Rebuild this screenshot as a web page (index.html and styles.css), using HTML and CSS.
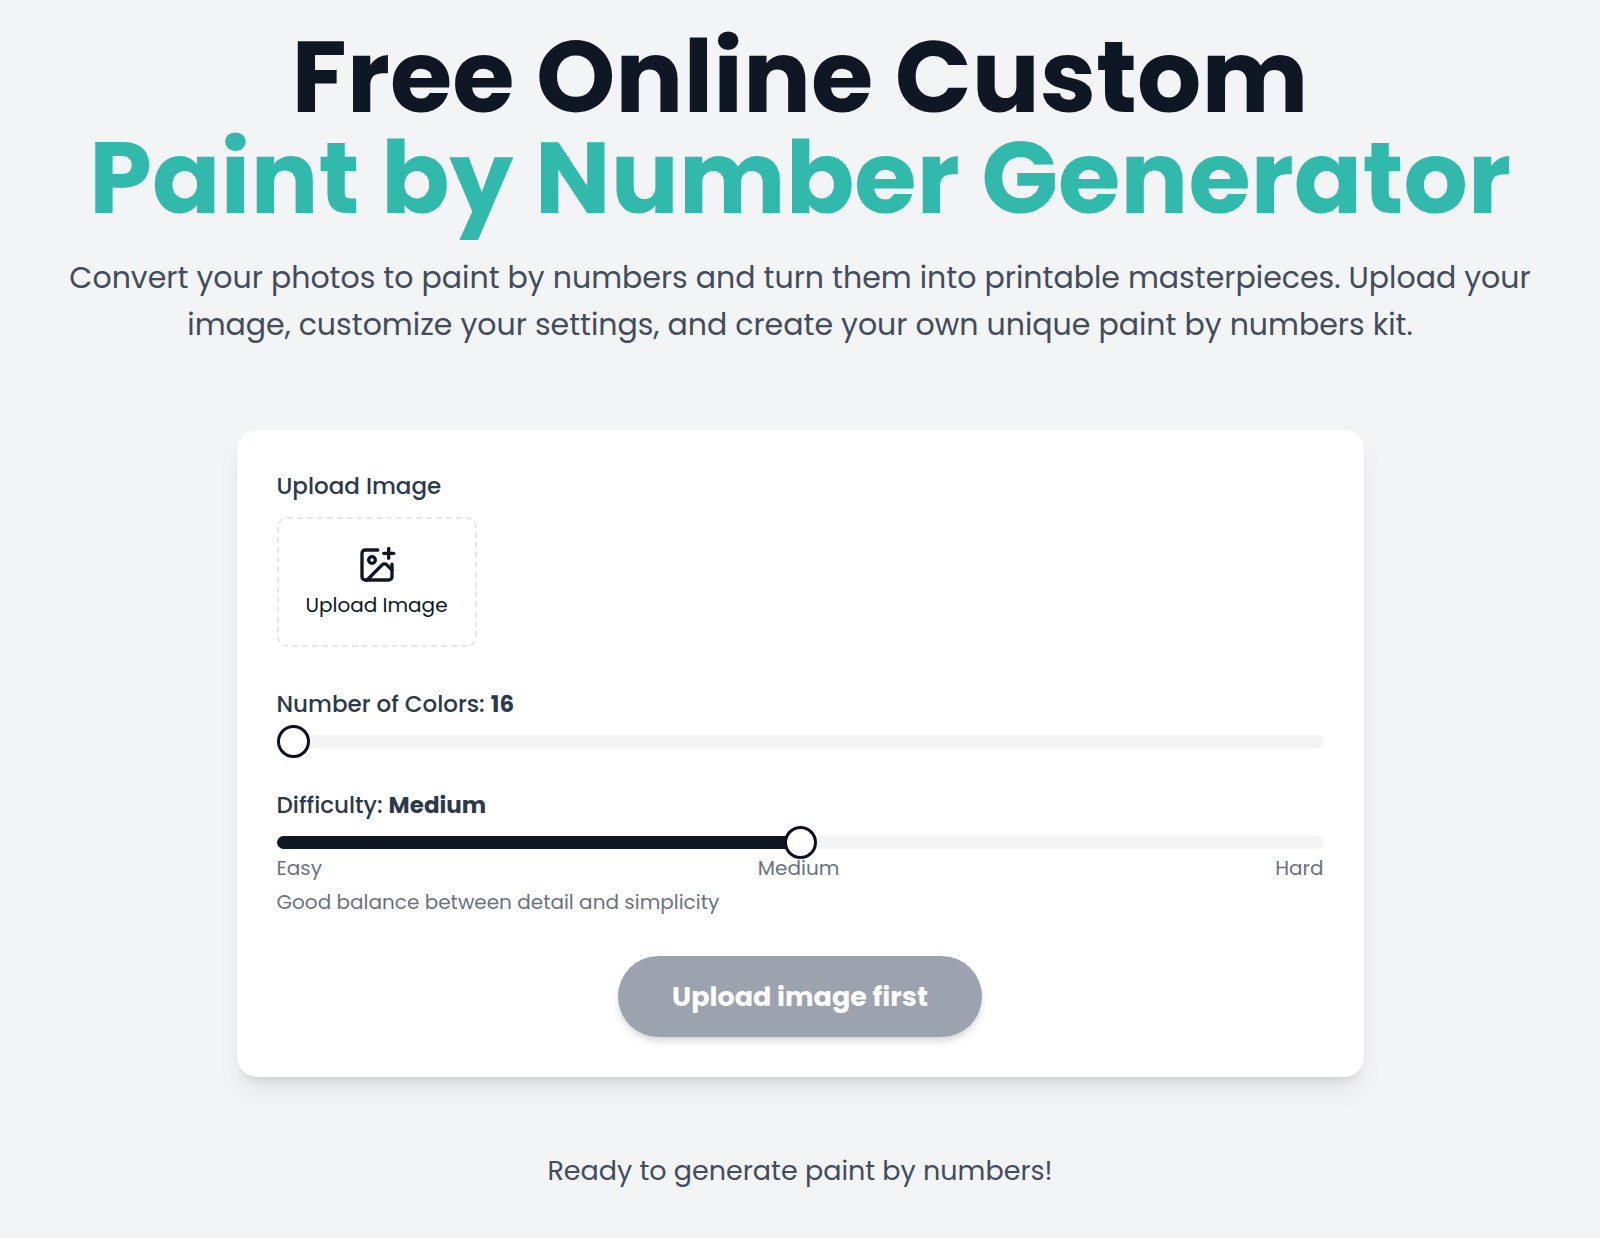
FILE: index.html
```
<!DOCTYPE html>
<html lang="en">
<head>
<meta charset="utf-8">
<meta name="viewport" content="width=device-width, initial-scale=1">
<title>Free Online Custom Paint by Number Generator</title>
<link rel="stylesheet" href="styles.css">
</head>
<body>
<main class="page">
  <header class="hero">
    <h1 class="title">Free Online Custom <span class="accent">Paint by Number Generator</span></h1>
    <p class="intro">Convert your photos to paint by numbers and turn them into printable masterpieces. Upload your image, customize your settings, and create your own unique paint by numbers kit.</p>
  </header>
  <form class="card">
    <div class="field">
      <div class="label">Upload Image</div>
      <button class="upload" type="button">
        <svg class="upload-icon" viewBox="0 0 24 24" fill="none" stroke="currentColor" stroke-width="2" stroke-linecap="round" stroke-linejoin="round" aria-hidden="true">
          <path d="M16 5h6"/><path d="M19 2v6"/>
          <path d="M21 11.5V19a2 2 0 0 1-2 2H5a2 2 0 0 1-2-2V5a2 2 0 0 1 2-2h7.5"/>
          <path d="m21 15-3.086-3.086a2 2 0 0 0-2.828 0L6 21"/>
          <circle cx="9" cy="9" r="2"/>
        </svg>
        <span>Upload Image</span>
      </button>
    </div>
    <div class="field">
      <label class="label" for="colors">Number of Colors: <strong>16</strong></label>
      <input class="slider slider-empty" id="colors" type="range" min="16" max="64" value="16">
    </div>
    <div class="field">
      <label class="label" for="difficulty">Difficulty: <strong>Medium</strong></label>
      <div class="scale">
        <input class="slider" id="difficulty" type="range" min="0" max="2" value="1">
        <div class="ticks"><span>Easy</span><span>Medium</span><span>Hard</span></div>
        <p class="hint">Good balance between detail and simplicity</p>
      </div>
    </div>
    <button class="submit" type="submit" disabled>Upload image first</button>
  </form>
  <p class="status">Ready to generate paint by numbers!</p>
</main>
</body>
</html>
```
FILE: styles.css
```
* {
  box-sizing: border-box;
}

body {
  margin: 0;
  background: #f3f4f6;
  color: #0f1724;
  font-family: Poppins, Inter, sans-serif;
}

h1,
p {
  margin: 0;
}

button,
input {
  font: inherit;
  color: inherit;
}

.page {
  display: flex;
  flex-direction: column;
  align-items: center;
  padding: 26px 48px 48px;
}

.hero {
  text-align: center;
  margin-bottom: 82px;
}

.title {
  font-size: 101px;
  line-height: 101px;
  font-weight: 700;
}

.accent {
  display: block;
  color: #31b9ac;
}

.intro {
  max-width: 1504px;
  margin-top: 26px;
  font-size: 30px;
  line-height: 47px;
  color: #424c5c;
}

.card {
  display: flex;
  flex-direction: column;
  gap: 41px;
  width: 100%;
  max-width: 1127px;
  padding: 40px;
  border-radius: 20px;
  background: #fff;
  box-shadow: 0 16px 24px -4px rgb(0 0 0 / 8%), 0 8px 10px -6px rgb(0 0 0 / 10%);
}

.field {
  display: flex;
  flex-direction: column;
  gap: 15px;
}

.label {
  font-size: 23px;
  line-height: 32px;
  font-weight: 500;
  color: #2c394b;
}

.label strong {
  font-weight: 700;
}

.upload {
  display: flex;
  flex-direction: column;
  align-items: center;
  justify-content: center;
  gap: 6px;
  width: 200px;
  height: 130px;
  padding: 0;
  border: 2px dashed #e5e7eb;
  border-radius: 10px;
  background: #fff;
  font-size: 20px;
  line-height: 28px;
}

.upload-icon {
  width: 40px;
  height: 40px;
}

.scale {
  display: flex;
  flex-direction: column;
}

.slider {
  appearance: none;
  width: 100%;
  height: 13px;
  margin: 0;
  border-radius: 7px;
  background: linear-gradient(to right, #0f1724 50%, #f4f4f5 50%);
}

.slider-empty {
  background: #f4f4f5;
}

.slider::-webkit-slider-thumb {
  appearance: none;
  width: 33px;
  height: 33px;
  border: 3px solid #0b1020;
  border-radius: 50%;
  background: #fff;
}

.ticks {
  display: flex;
  justify-content: space-between;
  margin-top: 6px;
}

.ticks,
.hint {
  font-size: 20px;
  line-height: 26px;
  color: #6b7280;
}

.hint {
  margin-top: 8px;
}

.submit {
  align-self: center;
  padding: 24px 54px;
  border: 0;
  border-radius: 41px;
  background: #9ca3af;
  color: #fff;
  font-size: 27px;
  line-height: 33px;
  font-weight: 700;
  box-shadow: 0 6px 10px -1px rgb(0 0 0 / 10%), 0 3px 6px -2px rgb(0 0 0 / 10%);
}

.status {
  margin-top: 74px;
  font-size: 27px;
  line-height: 40px;
  color: #424c5c;
  text-align: center;
}
```
